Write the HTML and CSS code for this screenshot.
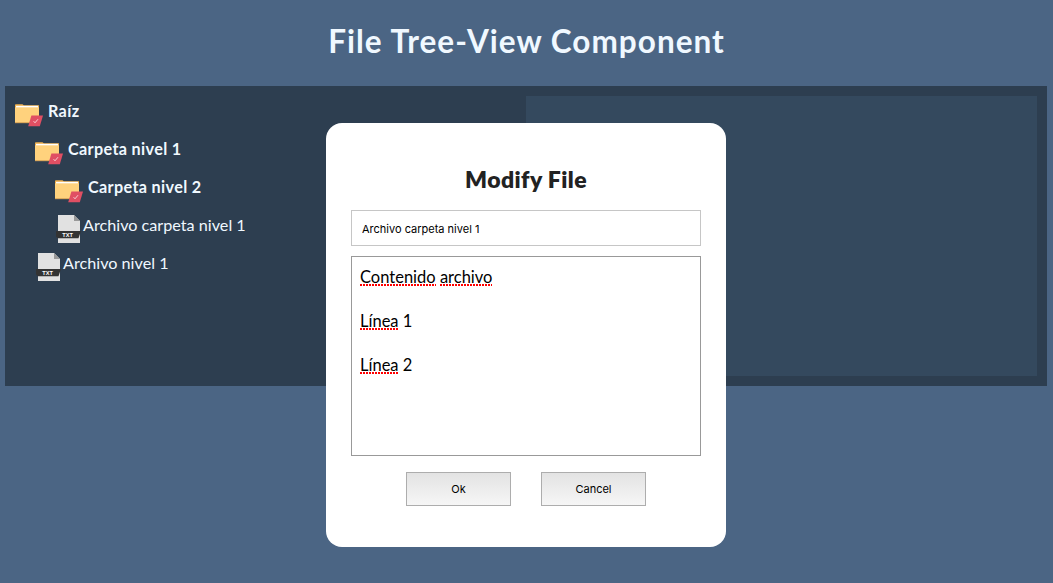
FILE: index.html
```html
<!DOCTYPE html>
<html lang="es">
<head>
<meta charset="utf-8">
<title>File Tree-View Component</title>
<link rel="stylesheet" href="styles.css">
</head>
<body>
<svg class="sprite" aria-hidden="true">
  <symbol id="folder" viewBox="0 0 28 24">
    <path d="M0 1.2Q0 .3 .8 .3H7.5L8.8 1.3H24V19H0Z" fill="#f0b04c"/>
    <path d="M1 1.8H23V5H1Z" fill="#fff"/>
    <path d="M0 3.3H24V18.6H0Z" fill="#ffd27d"/>
    <path d="M0 18.4H24V19.2H0Z" fill="#c99b57"/>
    <path d="M16.4 11.4H28L24.8 22.2H13.2Z" fill="#e04f63"/>
    <path d="M18.6 17.2L20 18.8L23 15.2" fill="none" stroke="#f9d7dc" stroke-width=".9"/>
  </symbol>
  <symbol id="txt" viewBox="0 0 25 29">
    <path d="M2 0H18L24 6V28H2Z" fill="#e1e1e1"/>
    <path d="M18 0L24 6H18Z" fill="#999"/>
    <path d="M0 16H25L22.5 23.3H2L0 21.5Z" fill="#333"/>
    <text x="11.6" y="21.8" class="badge">TXT</text>
  </symbol>
</svg>
<h1 class="title">File Tree-View Component</h1>
<main class="explorer">
  <ul class="tree">
    <li class="node folder"><svg class="folder-icon"><use href="#folder"/></svg><span class="name root">Raíz</span></li>
    <li class="node folder level-1"><svg class="folder-icon"><use href="#folder"/></svg><span class="name">Carpeta nivel 1</span></li>
    <li class="node folder level-2"><svg class="folder-icon"><use href="#folder"/></svg><span class="name">Carpeta nivel 2</span></li>
    <li class="node file level-2"><svg class="file-icon"><use href="#txt"/></svg><span class="name">Archivo carpeta nivel 1</span></li>
    <li class="node file level-1"><svg class="file-icon"><use href="#txt"/></svg><span class="name">Archivo nivel 1</span></li>
  </ul>
  <section class="preview"></section>
</main>
<div class="overlay">
  <form class="modal">
    <h2 class="modal-title">Modify File</h2>
    <input class="filename" type="text" value="Archivo carpeta nivel 1">
    <div class="content">
      <p><span class="misspelled">Contenido</span> <span class="misspelled">archivo</span></p>
      <p><span class="misspelled">Línea</span> 1</p>
      <p><span class="misspelled">Línea</span> 2</p>
    </div>
    <div class="actions">
      <button class="button" type="button">Ok</button>
      <button class="button" type="button">Cancel</button>
    </div>
  </form>
</div>
</body>
</html>
```
FILE: styles.css
```css
* { box-sizing: border-box; }
body {
  margin: 0;
  height: 583px;
  overflow: hidden;
  background: #4b6584;
  color: aliceblue;
  font-family: Lato, "Liberation Sans", sans-serif;
}
.sprite { display: none; }
.badge {
  font: bold 5.6px "Liberation Sans", sans-serif;
  fill: #fff;
  text-anchor: middle;
}
.title {
  margin: 0;
  padding-top: 19px;
  height: 86px;
  text-align: center;
  font-size: 31.5px;
  line-height: 44px;
  font-weight: 700;
  letter-spacing: 1.02px;
}
.explorer {
  display: grid;
  grid-template-columns: 1fr 1fr;
  height: 300px;
  margin: 0 6px 0 5px;
  padding: 10px;
  background: #2d3e50;
}
.tree { list-style: none; margin: 0; padding: 0; }
.node {
  display: flex;
  height: 38px;
  font-size: 16.2px;
  line-height: 30px;
  white-space: nowrap;
}
.level-1 { padding-left: 20px; }
.level-2 { padding-left: 40px; }
.folder { font-weight: 700; letter-spacing: 0.34px; }
.folder-icon { width: 28px; height: 24px; margin: 8px 5px 0 0; }
.file-icon { width: 25px; height: 29px; margin: 5px 1px 0 1px; }
.file .name { margin-left: 1px; }
.preview { background: #34495e; }
.overlay {
  position: fixed;
  inset: 0;
  display: flex;
  justify-content: center;
  align-items: flex-start;
  padding: 123px 1px 0 0;
}
.modal {
  width: 400px;
  height: 424px;
  padding: 38px 25px 0;
  border-radius: 16px;
  background: #fff;
  color: #222;
}
.modal-title {
  margin: 0 0 13px;
  text-align: center;
  font-size: 23px;
  line-height: 36px;
  font-weight: 800;
  letter-spacing: 0.4px;
}
.filename {
  display: block;
  width: 350px;
  height: 36px;
  margin: 0 0 10px;
  padding: 2px 10px 0;
  border: 1px solid #c6c6c6;
  background: #fff;
  color: #000;
  font: 11px Inter, sans-serif;
}
.content {
  height: 200px;
  padding: 9px 8px;
  border: 1px solid #999;
  color: #000;
  font-size: 16.5px;
  line-height: 22px;
}
.content p { margin: 0 0 22px; }
.misspelled {
  background: repeating-linear-gradient(90deg, #f00 0 2px, transparent 2px 3px) left calc(100% - 1px) / 100% 2px no-repeat;
}
.actions {
  display: flex;
  justify-content: center;
  gap: 30px;
  padding-top: 16px;
}
.button {
  width: 105px;
  height: 34px;
  padding: 0;
  border: 1px solid #adadad;
  background: linear-gradient(#e3e3e3, #f6f6f6);
  color: #000;
  font: 11px Inter, sans-serif;
}
```
